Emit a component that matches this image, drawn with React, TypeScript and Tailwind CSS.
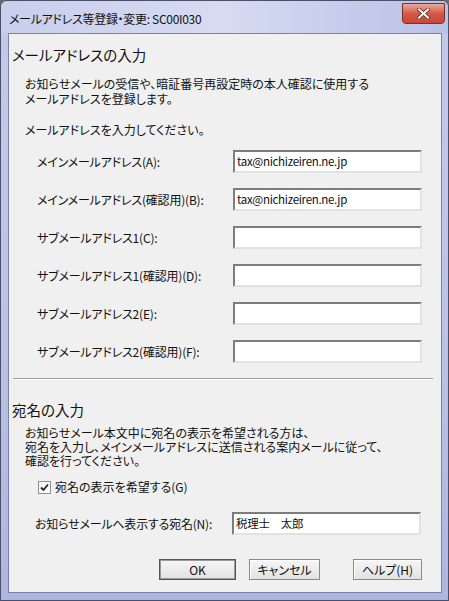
import React from 'react'

const font = "[font-family:'Noto_Sans_CJK_JP','Noto_Sans',sans-serif] [font-feature-settings:'palt']"

const rows = [
  { label: 'メインメールアドレス(A):', value: 'tax@nichizeiren.ne.jp' },
  { label: 'メインメールアドレス(確認用)(B):', value: 'tax@nichizeiren.ne.jp' },
  { label: 'サブメールアドレス1(C):', value: '' },
  { label: 'サブメールアドレス1(確認用)(D):', value: '' },
  { label: 'サブメールアドレス2(E):', value: '' },
  { label: 'サブメールアドレス2(確認用)(F):', value: '' },
]

function TextBox({ value }: { value: string }) {
  return (
    <div className="w-[189px] h-[23px] bg-white border-2 border-t-[#7d7d7d] border-l-[#7d7d7d] border-r-[#e2e2e2] border-b-[#e2e2e2] flex items-center pl-[2px] text-[11.5px] tracking-[-0.3px] leading-none text-[#111]">
      {value}
    </div>
  )
}

function Button({ label, width, isDefault }: { label: string; width: string; isDefault?: boolean }) {
  return (
    <div
      className={`${width} h-[21px] flex items-center justify-center text-[12px] text-[#111] bg-gradient-to-b from-[#f6f6f6] to-[#e2e2e2] border ${
        isDefault ? 'border-[#555] shadow-[inset_0_0_0_1px_#9a9a9a]' : 'border-[#8a8a8a] shadow-[inset_1px_1px_0_#fff]'
      }`}
    >
      {label}
    </div>
  )
}

export default function App() {
  return (
    <div className={`w-[449px] h-[601px] bg-[#6c6c6c] ${font}`}>
      <div className="w-full h-full flex flex-col rounded-t-[7px] border border-[#4a4f6a] bg-gradient-to-b from-[#c3cae9] via-[#bcc4e6] to-[#aeb6df] overflow-hidden">
        {/* title bar */}
        <div className="relative h-[32px] shrink-0 flex items-center pl-[8px] bg-gradient-to-r from-[#c8cfec] via-[#d6dbf2] to-[#b9c1e6]">
          <span className="text-[12px] text-[#111] tracking-[-0.3px] mt-[3px]">メールアドレス等登録・変更: SC00I030</span>
          <div className="absolute right-[3px] top-[2px] w-[43px] h-[21px] rounded-b-[4px] border border-[#7a3029] bg-gradient-to-b from-[#eaa99b] via-[#d35a47] to-[#c84834] flex items-center justify-center">
            <svg width="13" height="11" viewBox="0 0 13 11">
              <path d="M2 1.5 L11 9.5 M11 1.5 L2 9.5" stroke="#6a2820" strokeWidth="3.6" strokeLinecap="square" />
              <path d="M2 1.5 L11 9.5 M11 1.5 L2 9.5" stroke="#ffffff" strokeWidth="2" strokeLinecap="square" />
            </svg>
          </div>
        </div>

        {/* client area */}
        <div className="flex-1 ml-[7px] mr-[6px] mb-[7px] border border-[#7b82a6] bg-[#f0f0f0] flex flex-col text-[#111]">
          <div className="mt-[11px] pl-[3px] text-[14.5px] leading-[20px]">メールアドレスの入力</div>
          <div className="mt-[11px] pl-[16px] text-[12px] leading-[15px]">
            <div>お知らせメールの受信や、暗証番号再設定時の本人確認に使用する</div>
            <div>メールアドレスを登録します。</div>
          </div>
          <div className="mt-[16px] pl-[16px] text-[12px] leading-[15px]">メールアドレスを入力してください。</div>

          <div className="mt-[13px] flex flex-col gap-[15px]">
            {rows.map((r) => (
              <div key={r.label} className="flex items-center pl-[28px]">
                <div className="w-[196px] text-[12px] tracking-[-0.2px]">{r.label}</div>
                <TextBox value={r.value} />
              </div>
            ))}
          </div>

          <div className="mt-[15px] ml-[4px] w-[420px] border-t border-[#a0a0a0] border-b border-b-white" />

          <div className="mt-[20px] pl-[3px] text-[14.5px] leading-[20px]">宛名の入力</div>
          <div className="mt-[6px] pl-[16px] text-[12px] leading-[14px]">
            <div>お知らせメール本文中に宛名の表示を希望される方は、</div>
            <div>宛名を入力し、メインメールアドレスに送信される案内メールに従って、</div>
            <div>確認を行ってください。</div>
          </div>

          <div className="mt-[12px] pl-[29px] flex items-center h-[14px] text-[12px]">
            <div className="w-[13px] h-[13px] border border-[#8e8f8f] bg-gradient-to-br from-[#f4f4f4] to-white flex items-center justify-center">
              <svg width="9" height="9" viewBox="0 0 9 9">
                <path d="M1 4.5 L3.5 7 L8 1.5" fill="none" stroke="#222" strokeWidth="1.8" />
              </svg>
            </div>
            <span className="ml-[4px]">宛名の表示を希望する(G)</span>
          </div>

          <div className="mt-[18px] pl-[26px] flex items-center">
            <div className="w-[197px] text-[12px] tracking-[-0.2px]">お知らせメールへ表示する宛名(N):</div>
            <TextBox value="税理士　太郎" />
          </div>

          <div className="mt-[24px] flex justify-end pr-[19px] gap-[13px]">
            <Button label="OK" width="w-[77px]" isDefault />
            <Button label="キャンセル" width="w-[71px]" />
            <div className="w-[7px]" />
            <Button label="ヘルプ(H)" width="w-[69px]" />
          </div>
        </div>
      </div>
    </div>
  )
}
